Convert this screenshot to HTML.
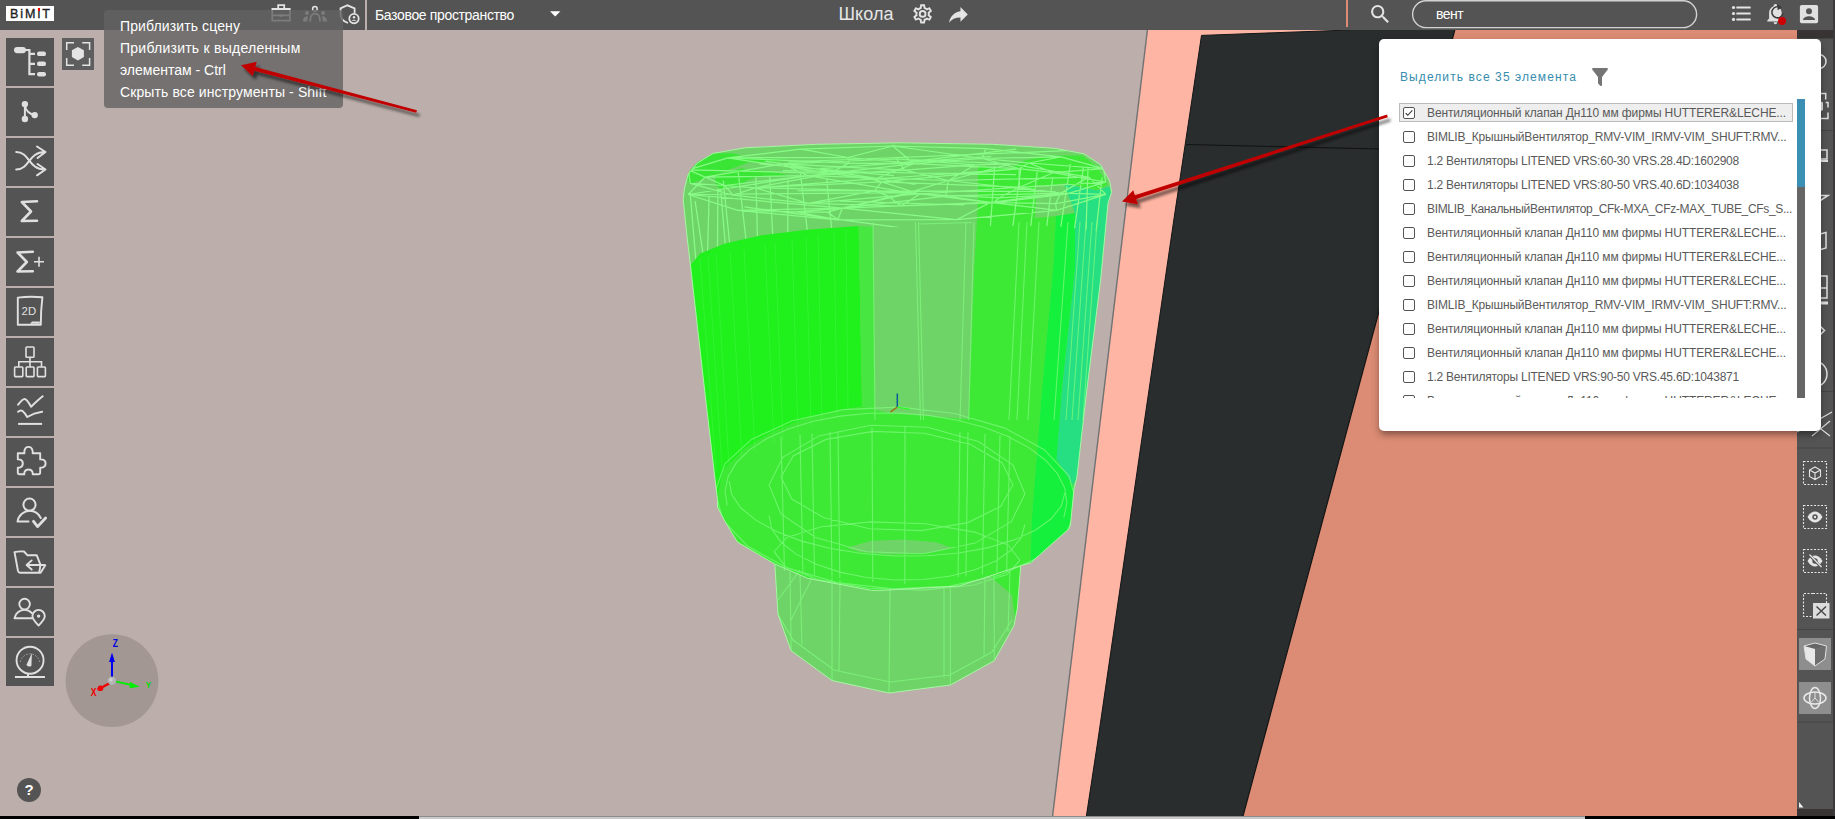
<!DOCTYPE html>
<html lang="ru">
<head>
<meta charset="utf-8">
<title>BIMIT</title>
<style>
*{box-sizing:border-box;margin:0;padding:0}
html,body{width:1835px;height:819px;overflow:hidden;background:#bcaeaa;font-family:"Liberation Sans",sans-serif}
#app{position:relative;width:1835px;height:819px;overflow:hidden;background:#bcaeaa}
#scene{position:absolute;left:0;top:0;width:1835px;height:819px}
#header{position:absolute;left:0;top:0;width:1835px;height:30px;background:#545454}
#logo{position:absolute;left:6px;top:6px;width:48px;height:15px;background:#fff;color:#1e1e1e;font-weight:normal;-webkit-text-stroke:0.350px #1e1e1e;font-size:12.500px;line-height:17px;white-space:nowrap}
#logo span{position:absolute;left:4px;top:0;letter-spacing:2px}
#logo b{position:relative;font-weight:inherit}
#logo i{position:absolute;left:0.200px;top:1.300px;width:2.400px;height:2.400px;background:#f00}
.lbtn{position:absolute;left:6px;width:48px;height:48px;background:#545454}
.lbtn svg{position:absolute;left:0;top:0;width:48px;height:48px}
#zoombtn{position:absolute;left:62px;top:38px;width:32px;height:32px;background:#5e5e5e}
#tooltip{position:absolute;left:104px;top:10px;width:239px;height:97.500px;background:rgba(97,97,97,0.8);border-radius:4px;color:#fff;font-size:14px;line-height:22px;padding:5px 0 0 16px;white-space:nowrap}
#hdiv{position:absolute;left:365px;top:0;width:2px;height:30px;background:#bcaeaa}
#space{position:absolute;left:375px;top:0;height:30px;line-height:30px;color:#fff;font-size:14px;white-space:nowrap;letter-spacing:-.35px}
#title{letter-spacing:.1px;position:absolute;left:838.500px;top:0;height:29px;line-height:28px;color:#e6e6e6;font-size:18px;white-space:nowrap}
#sdiv{position:absolute;left:1346px;top:0;width:2px;height:27px;background:#dc8c74}
#search{position:absolute;left:1412px;top:0;width:285px;height:28px;border-radius:14px;color:#fff;font-size:14px;line-height:28px;padding-left:24px;letter-spacing:-.5px}
#rbar{position:absolute;left:1797px;top:30px;width:38px;height:786px;background:#545454}
#popup{position:absolute;left:1379px;top:39px;width:442px;height:392px;background:#fff;border-radius:5px;box-shadow:0 5px 6px -2px rgba(0,0,0,.3),0 3px 10px rgba(0,0,0,.2)}
#selall{position:absolute;left:21px;top:30px;color:#368dad;font-size:12px;letter-spacing:1.09px;line-height:16px;white-space:nowrap}
#list{position:absolute;left:20px;top:60px;width:400px;height:299px;overflow:hidden}
.row{position:absolute;left:0;width:394px;height:24px;font-size:12px;line-height:24px;color:#5a5a5a;white-space:nowrap}
.row .cb{position:absolute;left:4px;top:6px;width:12px;height:12px;border:1px solid #555;border-radius:2px;background:#fff}
.row .tx{position:absolute;left:28px;top:0}
.row.sel{top:4px;height:19px;background:#eee;border:1px solid #bbb}
#sbar{position:absolute;left:418px;top:60px;width:8px;height:299px;background:#666}
#sbar div{width:8px;height:88px;background:#3a8fb3}
#bstrip{position:absolute;left:0;top:816px;width:1835px;height:3px;background:#000}
#bstrip div{position:absolute;left:418.500px;top:0;width:1166px;height:3px;background:#cacaca;border-top:1px solid #8c8c8c}
#help{position:absolute;left:17px;top:778px;width:24px;height:24px;border-radius:12px;background:#545454;color:#fff;font-weight:bold;font-size:15px;line-height:24px;text-align:center}
</style>
</head>
<body>
<div id="app">
<svg id="scene" viewBox="0 0 1835 819">
<defs><clipPath id="objclip"><polygon points="683.2,199.6 684.5,188.0 688.3,174.0 697.5,163.0 713.0,153.4 745.0,147.8 816.5,144.3 900.0,142.8 992.5,144.3 1054.8,148.3 1084.0,153.8 1100.6,164.8 1109.7,181.3 1111.6,192.3 1108.0,203.2 1100.6,280.0 1086.8,390.0 1076.8,478.0 1074.0,489.0 1070.4,525.5 1069.0,528.8 1030.6,562.9 1020.7,565.7 990.0,576.0 959.0,586.0 880.0,590.4 871.5,590.4 807.7,578.3 774.8,564.0 737.4,542.0 724.2,520.0 717.5,507.0 717.5,500.0 704.6,390.0 691.0,270.0 687.4,240.0"/><polygon points="774.8,564.0 778.0,614.5 791.2,650.8 832.0,680.5 889.0,693.0 950.4,685.0 994.3,660.7 1014.0,625.5 1017.4,608.0 1020.7,565.7 990.0,550.0 800.0,550.0"/></clipPath></defs><polygon points="1147.4,30.0 1350.0,30.0 1201.5,35.4 1191.9,100.0 1173.8,220.0 1098.1,739.0 1086.4,816.0 1052.6,816.0" fill="#ffb5a3"/>
<polygon points="1201.5,35.4 1350.0,30.0 1454.8,30.0 1243.0,816.0 1086.4,816.0 1098.1,739.0 1173.8,220.0 1191.9,100.0" fill="#2a2d2e"/>
<polygon points="1454.8,30.0 1797.0,30.0 1797.0,816.0 1243.0,816.0" fill="#dc8c74"/>
<line x1="1147.4" y1="30" x2="1052.6" y2="816" stroke="#707274" stroke-width="1.400"/>
<polyline points="1201.5,35.4 1191.9,100 1173.8,220 1098.1,739 1086.4,816" fill="none" stroke="#141617" stroke-width="1"/>
<line x1="1454.8" y1="30" x2="1243" y2="816" stroke="#111314" stroke-width="1.2"/>
<line x1="1186" y1="144.5" x2="1379" y2="149" stroke="#111314" stroke-width="1.2"/>
<line x1="1201.5" y1="35.4" x2="1350" y2="30" stroke="#141617" stroke-width="1"/>
<g id="obj">
<polygon points="774.8,564.0 778.0,614.5 791.2,650.8 832.0,680.5 889.0,693.0 950.4,685.0 994.3,660.7 1014.0,625.5 1017.4,608.0 1020.7,565.7 990.0,550.0 800.0,550.0" fill="#6fd468"/>
<polygon points="683.2,199.6 684.5,188.0 688.3,174.0 697.5,163.0 713.0,153.4 745.0,147.8 816.5,144.3 900.0,142.8 992.5,144.3 1054.8,148.3 1084.0,153.8 1100.6,164.8 1109.7,181.3 1111.6,192.3 1108.0,203.2 1100.6,280.0 1086.8,390.0 1076.8,478.0 1074.0,489.0 1070.4,525.5 1069.0,528.8 1030.6,562.9 1020.7,565.7 990.0,576.0 959.0,586.0 880.0,590.4 871.5,590.4 807.7,578.3 774.8,564.0 737.4,542.0 724.2,520.0 717.5,507.0 717.5,500.0 704.6,390.0 691.0,270.0 687.4,240.0" fill="#6fd468"/>
<polygon points="691.0,264.6 700.2,253.6 725.0,243.5 761.6,235.3 807.3,229.8 858.6,226.1 859.5,270.0 862.0,406.5 836.5,411.0 803.5,419.3 772.4,432.0 745.0,448.6 723.0,470.6 717.5,498.0 704.6,390.0 691.0,270.0" fill="#20f01c"/>
<polygon points="858.6,226.1 873.0,227.0 875.0,410.0 862.0,406.5 859.5,270.0" fill="#48e641"/>
<polygon points="717.5,498.0 723.0,470.6 745.0,448.6 772.4,432.0 803.5,419.3 836.5,411.0 862.0,406.5 875.0,410.0 890.0,412.9 968.7,419.3 974.2,270.0 978.0,200.0 978.0,166.0 1009.0,168.5 1026.0,160.0 1055.0,155.5 1082.0,155.5 1097.0,166.5 1108.0,185.0 1097.0,190.0 1082.0,187.0 1066.0,183.0 1060.0,200.0 1056.0,216.0 1053.0,270.0 1042.0,390.0 1031.7,520.0 1030.6,562.9 1020.7,565.7 990.0,576.0 959.0,586.0 880.0,590.4 871.5,590.4 807.7,578.3 774.8,564.0 737.4,542.0 724.2,520.0 717.5,507.0" fill="#3de935"/>
<polygon points="1056.0,216.0 1075.0,213.0 1075.0,270.0 1062.0,390.0 1056.6,459.6 1073.0,485.0 1074.0,489.0 1070.4,525.5 1069.0,528.8 1030.6,562.9 1031.7,520.0 1042.0,390.0 1053.0,270.0" fill="#15f03c"/>
<polygon points="1064.0,184.0 1082.0,187.5 1097.0,190.5 1109.5,186.0 1111.0,193.0 1108.0,203.2 1100.6,280.0 1086.8,390.0 1076.8,478.0 1073.0,485.0 1056.6,459.6 1062.0,390.0 1075.0,270.0 1075.0,213.0" fill="#26df82"/>
<polygon points="1020.7,565.7 990.0,576.0 1012.0,595.0 1015.0,620.0 1017.4,608.0" fill="#3de935"/>
<polygon points="847.0,548.0 870.0,541.0 901.8,539.4 935.0,542.0 952.6,548.0 930.0,553.0 890.0,554.5 860.0,552.0" fill="#6fd468"/>
<polygon points="686.5,178.0 690.0,170.0 697.5,162.0 713.0,153.3 732.5,153.2 748.0,157.5 800.0,160.5 748.0,162.4 722.0,172.5 706.0,178.0 690.0,184.0" fill="#3be535"/>
<polygon points="715.4,175.0 741.0,168.5 768.0,171.0 790.0,175.5 760.0,176.5 748.4,180.0 738.6,185.5 720.3,189.0 715.4,184.0" fill="#3be535"/>
<polygon points="1036.5,185.0 1050.0,185.5 1066.0,183.0 1060.0,200.0 1056.6,216.0 1035.0,218.0" fill="#6fd468"/>
<clipPath id="capclip"><polygon points="683.0,200.0 684.5,188.0 688.3,174.0 697.5,163.0 713.0,153.4 745.0,147.8 816.5,144.3 900.0,142.8 992.5,144.3 1054.8,148.3 1084.0,153.8 1100.6,164.8 1109.7,181.3 1111.6,192.3 1108.0,203.2 1105.0,232.0 1056.0,226.0 975.0,226.0 900.0,227.0 873.0,228.0 858.6,226.1 807.3,229.8 761.6,235.3 725.0,243.5 700.2,253.6 691.0,264.6 687.4,240.0"/></clipPath>
<path d="M848.0 157.5L848.5 163.1M881.6 181.9L919.8 194.0M999.5 197.8L993.2 202.8M919.8 194.0L1019.6 187.3M1019.0 168.7L1029.0 163.0M1066.1 194.2L993.2 202.8M1029.0 163.0L982.3 158.5M881.6 181.9L1019.0 168.7M724.6 185.5L690.3 183.3M919.8 194.0L993.2 202.8M1019.0 168.7L875.1 179.0M755.0 187.8L881.6 181.9M830.3 173.3L848.5 163.1M848.0 157.5L800.8 149.2M888.6 196.4L919.8 194.0M755.0 187.8L871.2 179.1M733.1 195.2L690.3 183.3M888.6 196.4L874.9 190.6M1053.1 172.7L1105.6 182.1M755.0 187.8L808.4 203.3M913.9 163.7L875.1 179.0M999.5 197.8L919.8 194.0M690.3 183.3L688.4 169.9M999.5 197.8L1066.1 194.2M1029.0 163.0L1103.7 168.7M993.2 202.8L901.2 206.0M688.4 169.9L727.9 157.8M901.2 206.0L808.4 203.3M1053.1 172.7L1019.6 187.3M724.6 185.5L733.1 195.2M1103.7 168.7L1105.6 182.1M913.9 163.7L1019.0 168.7M727.9 157.8L800.8 149.2M982.3 158.5L892.8 146.0M830.3 173.3L688.4 169.9M848.0 157.5L913.9 163.7M724.6 185.5L830.3 173.3M808.4 203.3L733.1 195.2M800.8 149.2L892.8 146.0M848.0 157.5L727.9 157.8M724.6 185.5L688.4 169.9M1019.6 187.3L1066.1 194.2M892.8 146.0L985.6 148.7M874.9 190.6L881.6 181.9M888.6 196.4L901.2 206.0M982.3 158.5L1060.9 156.8M1053.1 172.7L1103.7 168.7M755.0 187.8L874.9 190.6M881.6 181.9L1019.6 187.3M985.6 148.7L1060.9 156.8M830.3 173.3L871.2 179.1M848.5 163.1L727.9 157.8M1053.1 172.7L1029.0 163.0M1060.9 156.8L1103.7 168.7M913.9 163.7L892.8 146.0M881.6 181.9L871.2 179.1M755.0 187.8L724.6 185.5M871.2 179.1L875.1 179.0M1019.0 168.7L982.3 158.5M1019.6 187.3L1105.6 182.1M874.9 190.6L808.4 203.3M755.0 187.8L830.3 173.3M919.8 194.0L901.2 206.0M1019.0 168.7L1019.6 187.3M913.9 163.7L848.5 163.1M1066.1 194.2L1105.6 182.1M848.0 157.5L892.8 146.0M830.3 173.3L913.9 163.7M830.3 173.3L875.1 179.0M913.9 163.7L982.3 158.5M982.3 158.5L985.6 148.7M830.3 173.3L727.9 157.8M999.5 197.8L1019.6 187.3M881.6 181.9L875.1 179.0M1029.0 163.0L1060.9 156.8M1019.0 168.7L1053.1 172.7M874.9 190.6L919.8 194.0M888.6 196.4L808.4 203.3M755.0 187.8L733.1 195.2M1060.9 193.1L990.5 202.4M904.6 170.1L896.7 159.0M1010.8 163.9L1088.8 177.1M1055.6 203.6L1056.6 210.3M990.5 202.4L1055.6 203.6M1088.8 177.1L1105.9 194.4M948.4 180.5L808.0 175.7M842.2 208.2L737.7 210.3M842.2 208.2L827.5 212.1M1060.9 193.1L1088.8 177.1M910.8 193.4L909.0 192.7M688.2 194.5L705.0 177.2M948.4 180.5L975.4 164.8M975.4 164.8L1010.8 163.9M948.4 180.5L945.9 196.1M827.5 212.1L837.8 219.8M1056.6 210.3L956.7 219.7M808.0 175.7L688.2 194.5M1056.6 210.3L1105.9 194.4M909.0 192.7L945.9 196.1M705.0 177.2L782.7 163.9M909.0 192.7L688.2 194.5M904.6 170.1L782.7 163.9M990.5 202.4L842.2 208.2M842.2 208.2L909.0 192.7M990.5 202.4L956.7 219.7M1060.9 193.1L1055.6 203.6M842.2 208.2L796.7 211.8M990.5 202.4L945.9 196.1M956.7 219.7L837.8 219.8M796.7 211.8L827.5 212.1M796.7 211.8L737.7 210.3M948.4 180.5L904.6 170.1M842.2 208.2L837.8 219.8M808.0 175.7L904.6 170.1M910.8 193.4L842.2 208.2M910.8 193.4L945.9 196.1M782.7 163.9L896.7 159.0M975.4 164.8L896.7 159.0M948.4 180.5L1088.8 177.1M808.0 175.7L782.7 163.9M837.8 219.8L737.7 210.3M1060.9 193.1L945.9 196.1M896.7 159.0L1010.8 163.9M1055.6 203.6L1105.9 194.4M842.2 208.2L945.9 196.1M990.5 202.4L1056.6 210.3M842.2 208.2L956.7 219.7M1060.9 193.1L1105.9 194.4M948.4 180.5L1060.9 193.1M842.2 208.2L688.2 194.5M948.4 180.5L909.0 192.7M796.7 211.8L837.8 219.8M808.0 175.7L909.0 192.7M948.4 180.5L1010.8 163.9M808.0 175.7L705.0 177.2M904.6 170.1L975.4 164.8M737.7 210.3L688.2 194.5M744.4 206.9L901.6 227.8M797.7 190.5L1055.5 191.5M759.4 163.8L893.9 175.7M788.3 162.0L1066.7 150.7M782.8 170.7L1016.0 174.6M820.0 168.7L991.2 156.4M765.5 161.1L915.3 184.3M892.0 163.9L1016.4 149.1M840.0 201.1L964.1 205.0M690.2 193.1L696.8 272.0M695.1 201.1L705.8 272.0M709.1 196.9L707.0 272.0M717.8 188.4L717.4 272.0M720.6 188.8L727.6 272.0M723.3 180.6L732.5 272.0M738.0 170.5L749.8 272.0M755.8 176.6L758.4 272.0M769.7 176.6L774.6 272.0M787.9 180.0L787.6 272.0M800.4 173.3L812.3 272.0M826.6 178.6L836.1 272.0M994.7 165.9L990.0 232.0M1021.0 167.6L1012.0 232.0M1037.4 169.9L1030.0 232.0M1052.8 177.0L1046.0 232.0M1070.4 163.8L1060.0 232.0M1083.4 167.5L1074.0 232.0M1088.0 168.1L1086.0 232.0M1102.1 177.4L1096.0 232.0" fill="none" stroke="#88fb86" stroke-width="1.250" clip-path="url(#capclip)"/>
<path d="M700.0 258.0L716.0 470.0M708.0 256.4L722.0 467.3M716.0 254.8L729.0 464.1M730.0 252.0L742.0 458.3M744.0 249.2L755.0 452.4M765.0 245.0L774.0 443.9M775.0 243.0L783.0 439.9M792.0 239.6L798.0 433.1M806.0 236.8L811.0 427.2M818.0 234.4L822.0 422.3M834.0 231.2L837.0 415.6M846.0 228.8L848.0 410.6" fill="none" stroke="#4cf848" stroke-width="1" stroke-opacity="0.45" clip-path="url(#objclip)"/>
<path d="M873.0 222.0L875.0 420.0M915.5 222.0L920.5 420.0M918.5 222.0L923.5 420.0M966.0 222.0L960.0 420.0M974.0 222.0L968.7 420.0M1019.0 222.0L1009.0 420.0M1027.0 222.0L1017.0 420.0M1039.0 222.0L1028.0 420.0M1068.0 222.0L1054.0 420.0M1080.0 222.0L1066.0 420.0M1086.0 222.0L1072.0 420.0M1092.0 222.0L1078.0 420.0M1097.0 222.0L1083.0 420.0M918.0 224.0L972.0 222.5M1076.9 504.3L1067.1 532.1L1040.5 556.6L999.8 575.3L948.9 586.4L892.8 588.9L837.1 582.5L787.1 567.9L747.8 546.3L723.0 520.1L715.1 491.7L724.9 463.9L751.5 439.4L792.2 420.7L843.1 409.6L899.2 407.1L954.9 413.5L1004.9 428.1L1044.2 449.7L1069.0 475.9L1076.9 504.3ZM727.2 505.7L725.1 491.0L728.2 476.5L736.4 462.7L749.5 449.9L767.0 438.5L788.4 428.9L813.1 421.3L840.3 416.1L869.2 413.3L898.9 413.1L928.6 415.4L957.2 420.2L984.0 427.3L1008.1 436.5L1028.8 447.6L1045.5 460.2L1057.6 473.9L1064.8 488.3L1066.9 503.0L1063.8 517.5M1024.9 494.0L1011.3 521.7L975.0 543.1L923.3 553.8L866.3 551.8L815.5 537.5L780.8 513.7L769.1 485.0L782.7 457.3L819.0 435.9L870.7 425.2L927.7 427.2L978.5 441.5L1013.2 465.3L1024.9 494.0ZM1012.9 485.0L1000.7 506.3L967.9 522.6L921.1 530.6L869.5 528.8L823.4 517.5L791.8 499.0L781.1 477.0L793.3 455.7L826.1 439.4L872.9 431.4L924.5 433.2L970.6 444.5L1002.2 463.0L1012.9 485.0ZM1064.9 492.9L1061.2 506.2L1051.2 518.8L1035.3 530.2L1014.0 539.9L988.3 547.6L959.0 553.0L927.4 555.8L894.6 556.0L861.9 553.5L830.5 548.5L801.7 541.1L776.6 531.6L756.1 520.4L741.0 508.0L731.9 494.7L729.1 481.1M1024.9 524.5L1021.2 537.7L1011.3 550.0L995.7 560.9L975.1 569.7L950.6 576.0L923.4 579.5L894.9 580.0L866.5 577.5L839.6 572.1L815.6 564.1L795.7 553.9L780.8 542.0L771.8 529.0L769.1 515.5M1019.9 560.3L1007.2 574.6L972.7 585.2L923.2 590.1L868.5 588.2L819.4 579.9L785.7 566.9L774.1 551.7L786.8 537.4L821.3 526.8L870.8 521.9L925.5 523.8L974.6 532.1L1008.3 545.1L1019.9 560.3ZM781.0 436.6L784.5 571.1M800.0 434.7L802.9 573.4M812.0 433.5L814.5 574.8M830.0 431.7L832.0 577.0M838.0 430.9L839.8 577.9M872.0 427.5L872.8 582.0M905.0 425.8L904.8 584.0M960.0 431.3L958.1 577.4M968.0 432.1L965.9 576.5M985.0 433.8L982.4 574.4M1000.0 435.3L996.9 572.6M1010.0 436.3L1006.6 571.4M778.0 614.5L793.0 640.0L834.0 670.0L890.0 682.0L950.0 675.0L992.0 652.0L1012.0 620.0M890.0 590.0L889.0 693.0M832.0 578.0L832.0 680.5M840.0 580.0L839.0 672.0M950.4 586.0L950.4 685.0M944.0 587.0L944.0 678.0M994.0 575.0L994.3 660.7M985.0 578.0L984.0 655.0M790.0 572.0L791.2 650.8M800.0 575.0L802.0 645.0M1010.0 570.0L1008.0 632.0M778.0 600.0L800.0 570.0M791.0 620.0L812.0 578.0" fill="none" stroke="#80f97e" stroke-width="1.100" stroke-opacity="0.720" clip-path="url(#objclip)"/>
<polygon points="683.2,199.6 684.5,188.0 688.3,174.0 697.5,163.0 713.0,153.4 745.0,147.8 816.5,144.3 900.0,142.8 992.5,144.3 1054.8,148.3 1084.0,153.8 1100.6,164.8 1109.7,181.3 1111.6,192.3 1108.0,203.2 1100.6,280.0 1086.8,390.0 1076.8,478.0 1074.0,489.0 1070.4,525.5 1069.0,528.8 1030.6,562.9 1020.7,565.7 990.0,576.0 959.0,586.0 880.0,590.4 871.5,590.4 807.7,578.3 774.8,564.0 737.4,542.0 724.2,520.0 717.5,507.0 717.5,500.0 704.6,390.0 691.0,270.0 687.4,240.0" fill="none" stroke="#a6f7a2" stroke-width="1"/>
<polyline points="774.8,564.0 778.0,614.5 791.2,650.8 832.0,680.5 889.0,693.0 950.4,685.0 994.3,660.7 1014.0,625.5 1017.4,608.0 1020.7,565.7" fill="none" stroke="#a6f7a2" stroke-width="1" />
<path d="M897.3 393.5V407" stroke="#0a5a9a" stroke-width="1.5"/><path d="M897.3 407L890.5 412" stroke="#a06a10" stroke-width="1.5"/><path d="M897.3 407L909.7 409.3" stroke="#22ff22" stroke-width="1.2"/>
</g><circle cx="112" cy="680.700" r="46.400" fill="#a39793"/>
<path d="M112 681V659" stroke="#0000ee" stroke-width="2"/><path d="M112 652.500l-2.900 9.500h5.800z" fill="#0000ee"/>
<path d="M110 683L97.500 689.800" stroke="#f00000" stroke-width="2.400"/><circle cx="100.500" cy="688.300" r="2.800" fill="#f00000"/>
<path d="M116 681.700L132 685" stroke="#00ee00" stroke-width="1.800"/><path d="M139.700 686.700l-9.600-4.600-.600 6.200z" fill="#00ee00"/>
<circle cx="111.900" cy="680.800" r="4.200" fill="#b4b4b4"/><circle cx="111" cy="679.800" r="1.600" fill="#d4d4d0"/>
<text x="112.700" y="646.900" font-family="Liberation Sans,sans-serif" font-size="11.300" font-weight="bold" textLength="5.200" lengthAdjust="spacingAndGlyphs" fill="#0000dd">Z</text>
<text x="145.700" y="688.200" font-family="Liberation Sans,sans-serif" font-size="9.800" font-weight="bold" textLength="5.600" lengthAdjust="spacingAndGlyphs" fill="#00dd00">Y</text>
<text x="90.800" y="696.200" font-family="Liberation Sans,sans-serif" font-size="11.300" font-weight="bold" textLength="5.800" lengthAdjust="spacingAndGlyphs" fill="#ee0000">X</text>
</svg>
<div id="header">
<div id="logo"><span>BiM<b>i<i></i></b>T</span></div>
<div id="hdiv"></div>
<div id="space">Базовое пространство</div>
<div id="title">Школа</div>
<div id="sdiv"></div>
<div id="search">вент</div><svg style="position:absolute;left:1410px;top:0" width="290" height="30" viewBox="1410 0 290 30"><rect x="1412.600" y="0.700" width="284" height="26.900" rx="13.450" fill="none" stroke="#d2d2d2" stroke-width="1.400"/></svg>
<svg style="position:absolute;left:0;top:0" width="1835" height="30" viewBox="0 0 1835 30">
<g fill="none" stroke="#e4e4e4" stroke-width="1.800">
<path d="M278.200 8.500V5.100H284.200V8.500"/>
<path d="M271.500 9H290.600" stroke-width="2"/>
<path d="M272.200 10V20.700H289.900V10M272.200 15.400H289.900" stroke-width="1.700"/>
</g>
<rect x="279.400" y="14.400" width="3.300" height="2.300" fill="#e4e4e4"/>
<g fill="#e4e4e4">
<circle cx="314.900" cy="8.900" r="2.300" fill="none" stroke="#e4e4e4" stroke-width="1.500"/>
<circle cx="307" cy="12.900" r="2"/><circle cx="323" cy="12.900" r="2"/>
<path d="M303 21.600C303 18.500 304.500 16.300 308 16.300C307.500 18 307.300 19.500 307.300 21.600Z"/>
<path d="M327 21.600C327 18.500 325.500 16.300 322 16.300C322.500 18 322.700 19.500 322.700 21.600Z"/>
<path d="M310.200 21.600C310.200 16 311.800 13.700 315.100 13.700S320 16 320 21.600" fill="none" stroke="#e4e4e4" stroke-width="1.700"/>
</g>
<path d="M354.600 13V8.400L347.400 5.300L340.500 8.400V14C340.500 18.500 343.500 21.500 348 23" fill="none" stroke="#e4e4e4" stroke-width="1.800"/>
<circle cx="354" cy="18.600" r="4.700" fill="#545454" stroke="#e4e4e4" stroke-width="1.800"/>
<circle cx="354" cy="17.300" r="1.200" fill="#e4e4e4"/><path d="M351.800 20.800C351.800 19.400 356.200 19.400 356.200 20.800Z" fill="#e4e4e4"/>
<path d="M550 11.200H560.400L555.200 16.600Z" fill="#fff"/>
<!-- gear -->
<g transform="translate(911.100,2.400) scale(0.960)" fill="#e4e4e4"><path d="M12,8A4,4 0 0,1 16,12A4,4 0 0,1 12,16A4,4 0 0,1 8,12A4,4 0 0,1 12,8M12,10A2,2 0 0,0 10,12A2,2 0 0,0 12,14A2,2 0 0,0 14,12A2,2 0 0,0 12,10M10,22C9.750,22 9.540,21.820 9.500,21.580L9.130,18.930C8.500,18.680 7.960,18.340 7.440,17.940L4.950,18.950C4.730,19.030 4.460,18.950 4.340,18.730L2.340,15.270C2.210,15.050 2.270,14.780 2.460,14.630L4.570,12.970L4.500,12L4.570,11L2.460,9.370C2.270,9.220 2.210,8.950 2.340,8.730L4.340,5.270C4.460,5.050 4.730,4.960 4.950,5.050L7.440,6.050C7.960,5.660 8.500,5.320 9.130,5.070L9.500,2.420C9.540,2.180 9.750,2 10,2H14C14.250,2 14.460,2.180 14.500,2.420L14.870,5.070C15.500,5.320 16.040,5.660 16.560,6.050L19.050,5.050C19.270,4.960 19.540,5.050 19.660,5.270L21.660,8.730C21.790,8.950 21.730,9.220 21.540,9.370L19.430,11L19.500,12L19.430,13L21.540,14.630C21.730,14.780 21.790,15.050 21.660,15.270L19.660,18.730C19.540,18.950 19.270,19.040 19.050,18.950L16.560,17.950C16.040,18.340 15.500,18.680 14.870,18.930L14.500,21.580C14.460,21.820 14.250,22 14,22H10M11.250,4L10.880,6.610C9.680,6.860 8.620,7.500 7.850,8.390L5.440,7.350L4.690,8.650L6.800,10.200C6.400,11.370 6.400,12.640 6.800,13.800L4.680,15.360L5.430,16.660L7.860,15.620C8.630,16.500 9.680,17.140 10.870,17.380L11.240,20H12.760L13.130,17.390C14.320,17.140 15.370,16.500 16.140,15.620L18.570,16.660L19.320,15.360L17.200,13.810C17.600,12.640 17.600,11.370 17.200,10.200L19.310,8.650L18.560,7.350L16.150,8.390C15.380,7.500 14.320,6.860 13.120,6.620L12.750,4H11.250Z"/></g>
<!-- share -->
<g transform="translate(945.900,1.900) scale(1.040)" fill="#e4e4e4"><path d="M21,12L14,5V9C7,10 4,15 3,20C5.500,16.500 9,14.900 14,14.900V19L21,12Z"/></g>
<!-- search -->
<g transform="translate(1368,2) scale(1.020)" fill="#e4e4e4"><path d="M9.500,3A6.500,6.500 0 0,1 16,9.500C16,11.110 15.410,12.590 14.440,13.730L14.710,14H15.500L20.500,19L19,20.500L14,15.500V14.710L13.730,14.440C12.590,15.410 11.110,16 9.500,16A6.500,6.500 0 0,1 3,9.500A6.500,6.500 0 0,1 9.500,3M9.500,5C7,5 5,7 5,9.500C5,12 7,14 9.500,14C12,14 14,12 14,9.500C14,7 12,5 9.500,5Z"/></g>
<!-- list -->
<g fill="#e4e4e4"><circle cx="1733.500" cy="7.500" r="1.600"/><circle cx="1733.500" cy="13.500" r="1.600"/><circle cx="1733.500" cy="19.400" r="1.600"/><rect x="1736.300" y="6.500" width="14.400" height="2" rx="0.500"/><rect x="1736.300" y="12.500" width="14.400" height="2" rx="0.500"/><rect x="1736.300" y="18.400" width="14.400" height="2" rx="0.500"/></g>
<!-- bell -->
<g transform="translate(1763.100,2.200) scale(1)" fill="#e0e0e0"><path d="M21,19V20H3V19L5,17V11C5,7.900 7.030,5.170 10,4.290C10,4.190 10,4.100 10,4A2,2 0 0,1 12,2A2,2 0 0,1 14,4C14,4.100 14,4.190 14,4.290C16.970,5.170 19,7.900 19,11V17L21,19M14,21A2,2 0 0,1 12,23A2,2 0 0,1 10,21" transform="translate(1.500,0) scale(0.900,0.960)"/></g>
<path d="M1780.500 7.500A5.600 5.600 0 1 0 1783 13.500" fill="none" stroke="#3a3a3a" stroke-width="1.500"/><path d="M1777.500 4.200L1782 7.600L1777.600 10.300Z" fill="#3a3a3a"/>
<circle cx="1782" cy="21" r="4" fill="#cc0000"/>
<!-- account box -->
<rect x="1799.900" y="5" width="18.200" height="18.200" rx="1.800" fill="#e0e0e0"/>
<circle cx="1809" cy="11.300" r="3" fill="#545454"/><path d="M1803 20C1803 17.400 1806.500 16.200 1809 16.200S1815 17.400 1815 20Z" fill="#545454"/>
<rect x="1833" y="0" width="2" height="30" fill="#3c3a3a"/>
</svg>

</div>
<div class="lbtn" style="top:38px"><svg viewBox="0 0 48 48"><rect x="8" y="9" width="12" height="6.200" rx="3.100" fill="#e0e0e0"/><path d="M19 12H23.400V36.200H29M23.400 15.800H29M23.400 25.900H29" fill="none" stroke="#e0e0e0" stroke-width="2.200"/><rect x="31" y="13.600" width="9" height="4.500" rx="2.200" fill="#e0e0e0"/><rect x="31" y="23.600" width="9" height="4.500" rx="2.200" fill="#e0e0e0"/><rect x="31" y="33.900" width="9" height="4.500" rx="2.200" fill="#e0e0e0"/></svg></div>
<div class="lbtn" style="top:88px"><svg viewBox="0 0 48 48"><circle cx="18.900" cy="16.100" r="3.200" fill="#e0e0e0"/><circle cx="18.900" cy="31" r="3.200" fill="#e0e0e0"/><circle cx="28.700" cy="27.100" r="3.200" fill="#e0e0e0"/><path d="M18.900 16V31M18.900 17C19.500 23 24 26.500 28.700 27.100" fill="none" stroke="#e0e0e0" stroke-width="2"/></svg></div>
<div class="lbtn" style="top:138px"><svg viewBox="0 0 48 48"><path d="M10.200 14C24 14 22 31.500 39 31.500M10.200 31.500C24 31.500 22 14 39 14M31 8.500L39.500 14L31.500 20M31.500 26L39.500 31.500L31 37.300" fill="none" stroke="#e0e0e0" stroke-width="2" stroke-linecap="round" stroke-linejoin="round"/></svg></div>
<div class="lbtn" style="top:188px"><svg viewBox="0 0 48 48"><path d="M31 13.200L15.800 14L25 23.500L15.800 33L31 32.700" fill="none" stroke="#e0e0e0" stroke-width="2.600" stroke-linecap="round" stroke-linejoin="round"/></svg></div>
<div class="lbtn" style="top:238px"><svg viewBox="0 0 48 48"><path d="M26.800 13.700L11.600 14.500L20.800 24L11.600 33.500L26.800 33.200" fill="none" stroke="#e0e0e0" stroke-width="2.600" stroke-linecap="round" stroke-linejoin="round"/><path d="M28 23.700H38M33 18.700V28.700" stroke="#e0e0e0" stroke-width="1.600"/></svg></div>
<div class="lbtn" style="top:288px"><svg viewBox="0 0 48 48"><path d="M11.800 9.600Q24 8.200 36.400 9.300Q34.800 22 34.800 36.800H11.800Z" fill="none" stroke="#e0e0e0" stroke-width="1.900" stroke-linejoin="round"/><path d="M24 35.800L26 33.600H33.800V35.800Z" fill="#e0e0e0"/><text x="15.600" y="26.800" font-family="Liberation Sans,sans-serif" font-size="11" fill="#e0e0e0" textLength="14.500" lengthAdjust="spacingAndGlyphs">2D</text></svg></div>
<div class="lbtn" style="top:338px"><svg viewBox="0 0 48 48"><g fill="none" stroke="#e0e0e0" stroke-width="1.600"><rect x="20" y="9" width="8" height="10.200" rx="0.800"/><rect x="8.600" y="29" width="8.200" height="9.600" rx="0.800"/><rect x="20.200" y="29" width="7.800" height="9.600" rx="0.800"/><rect x="31.400" y="29" width="8" height="9.600" rx="0.800"/><path d="M24 19.200V29M12.800 29V23.700H35.500V29"/></g></svg></div>
<div class="lbtn" style="top:388px"><svg viewBox="0 0 48 48"><g fill="none" stroke="#e0e0e0" stroke-linecap="round" stroke-linejoin="round"><path d="M12.100 16.700Q16.500 11 18.600 11T25.100 18.700Q32 12 36.700 8.300" stroke-width="2"/><path d="M12.100 23.800Q14.500 21.500 16.500 23T21.200 29Q28 25 36.100 23.800" stroke-width="2"/><path d="M12.100 35.900H36.100" stroke-width="2" stroke-linecap="butt"/></g></svg></div>
<div class="lbtn" style="top:438px"><svg viewBox="0 0 48 48"><path d="M11.800 15.200H18.400C18.400 15.200 17.600 8.900 22.500 8.900C27.400 8.900 26.600 15.200 26.600 15.200H34.200V21.400C34.200 21.400 39.600 20.800 39.600 25.500C39.600 30.200 34.200 29.600 34.200 29.600V34.500Q34.200 36.300 32.400 36.300H26.700C26.700 36.300 27.300 31.500 22.500 31.500C17.700 31.500 18.300 36.300 18.300 36.300H13.600Q11.800 36.300 11.800 34.500V29.600C11.800 29.600 16.800 30.200 16.800 25.500C16.800 20.800 11.800 21.400 11.800 21.400Z" fill="none" stroke="#e0e0e0" stroke-width="1.900" stroke-linejoin="round"/></svg></div>
<div class="lbtn" style="top:488px"><svg viewBox="0 0 48 48"><g fill="none" stroke="#e0e0e0" stroke-linecap="round" stroke-linejoin="round"><circle cx="23.500" cy="16.700" r="6.100" stroke-width="2"/><path d="M22.500 33.600H11.500C12.500 27 18 22.800 23.800 22.800C28.500 22.800 32.500 25.500 34.800 30" stroke-width="2"/><path d="M27.500 33.300L31.600 38.600L39.600 30" stroke-width="2.800"/></g></svg></div>
<div class="lbtn" style="top:538px"><svg viewBox="0 0 48 48"><g fill="none" stroke="#e0e0e0" stroke-linecap="round" stroke-linejoin="round" stroke-width="1.900"><path d="M8.500 14.200Q13 13 18 13.500L21.500 17.300H30.800L34.500 26.800L39.300 27.300L34.600 34.700H14Q12.500 34.700 12 33Z"/><path d="M38 27H21M25.700 22.400L20.600 27L25.700 31.500"/><path d="M34.500 26.800L33.300 34"/></g></svg></div>
<div class="lbtn" style="top:588px"><svg viewBox="0 0 48 48"><g fill="none" stroke="#e0e0e0" stroke-linecap="round" stroke-linejoin="round" stroke-width="1.900"><circle cx="18.600" cy="16.100" r="5.300"/><path d="M26 30.300H8.500C9.500 25 14 21.900 18.600 21.900C21.500 21.900 24 23 25.800 25"/><path d="M32.600 37.600C29 34 26.400 31 26.400 28.100A6.200 6.200 0 0 1 38.800 28.100C38.800 31 36.200 34 32.600 37.600Z" fill="#545454"/></g><circle cx="32.600" cy="28.100" r="1.700" fill="#e0e0e0"/></svg></div>
<div class="lbtn" style="top:638px"><svg viewBox="0 0 48 48"><g fill="none" stroke="#e0e0e0"><circle cx="24.050" cy="22.200" r="13.500" stroke-width="1.900"/><path d="M14.400 24A9.800 9.800 0 0 1 33.700 24" stroke-width="1" stroke-opacity="0.600" stroke-dasharray="1.600 1.600"/><path d="M22 35.500V39" stroke-width="2"/><path d="M8.900 39H39" stroke-width="2"/></g><path d="M25.900 15.100L25.400 28Q22.600 29.400 20.400 27Z" fill="#e0e0e0"/></svg></div>
<div id="zoombtn"><svg width="32" height="32" viewBox="62 38 32 32" style="position:absolute;left:0;top:0"><path d="M66.700 50V42.800H74M82.200 42.800H89.600V50M89.600 58V65.300H82.200M74 65.300H66.700V58" fill="none" stroke="#e4e4e4" stroke-width="1.500"/><path d="M77.900 46.900L83.900 50.300V57.100L77.900 60.500L71.900 57.100V50.300Z" fill="#e4e4e4"/></svg></div>
<div id="rbar"><svg style="position:absolute;left:0;top:0" width="38" height="789" viewBox="1797 30 38 789">
<rect x="1797" y="809" width="38" height="7" fill="#383433"/><rect x="1797" y="30" width="38" height="8.500" fill="#383433"/>
<rect x="1833" y="30" width="2" height="786" fill="#3c3a3a"/>
<g stroke="#444" stroke-width="1.200"><path d="M1797 130.500H1833M1797 391.500H1833M1797 448H1833M1797 629.500H1833M1797 722H1833"/></g>
<g fill="none" stroke="#e0e0e0" stroke-width="1.500">
<circle cx="1819" cy="61.500" r="7"/>
<path d="M1821 93.600H1825.700V99.500M1825.700 102.600H1828V107.500M1828 112.500V118.600H1821"/><path d="M1815 98.500L1823 102.500V110L1815 114Z" fill="#e0e0e0" stroke="none"/>
<rect x="1812" y="150" width="15" height="9"/><path d="M1812 161H1828" stroke-width="2"/>
<path d="M1812 206L1828 195.500H1812"/>
<path d="M1812 236L1826 232.500V248L1812 252"/>
<path d="M1812 276H1827V298H1812M1812 288H1827" /><path d="M1812 303H1828" stroke-width="3"/>
<path d="M1818 324L1824.500 330.500L1818 337"/>
<circle cx="1814" cy="374" r="13"/><rect x="1808" y="367" width="12" height="13"/>
<path d="M1797 432L1832 412M1812 422L1830 436M1812 436L1830 421" stroke-width="1.100"/>
</g>
<g fill="none" stroke="#e6e6e6" stroke-width="1.100" stroke-dasharray="2 1.500">
<rect x="1803.500" y="461.500" width="23" height="23"/><rect x="1803.500" y="505.500" width="23" height="23"/><rect x="1803.500" y="549.500" width="23" height="23"/><path d="M1813 593.500H1803.500V616.500H1813M1813 593.500H1826.500V603"/>
</g>
<g fill="none" stroke="#e6e6e6" stroke-width="1.100"><path d="M1815 467L1820.500 470V476.500L1815 479.500L1809.500 476.500V470ZM1809.500 470L1815 473L1820.500 470M1815 473V479.500"/></g>
<path d="M1807.500 517C1810 512.800 1812.500 511.500 1815 511.500S1820 512.800 1822.500 517C1820 521.200 1817.500 522.500 1815 522.500S1810 521.200 1807.500 517Z" fill="#e6e6e6"/><circle cx="1815" cy="517" r="2.700" fill="#545454"/><circle cx="1815" cy="517" r="1.200" fill="#e6e6e6"/>
<path d="M1807.500 561C1810 556.800 1812.500 555.500 1815 555.500S1820 556.800 1822.500 561C1820 565.200 1817.500 566.500 1815 566.500S1810 565.200 1807.500 561Z" fill="#e6e6e6"/><circle cx="1815" cy="561" r="2.700" fill="#545454"/><path d="M1809 554.500L1821.500 567.500" stroke="#545454" stroke-width="2.600"/><path d="M1809.500 554.500L1821.500 567" stroke="#e6e6e6" stroke-width="1.200"/>
<rect x="1813" y="603" width="16.500" height="15.500" fill="#dcdcdc"/><path d="M1816.500 606.500L1826 615.500M1826 606.500L1816.500 615.500" stroke="#444" stroke-width="1.400"/>
<rect x="1799" y="638" width="32" height="32" fill="#8e8e8e"/><rect x="1799" y="682" width="32" height="32" fill="#8e8e8e"/>
<path d="M1804 646L1815 643L1826.500 646L1815 649Z" fill="#666"/><path d="M1804 646L1815 649V666L1806 659Z" fill="#e8e8e8"/><path d="M1815 649L1826.500 646L1825 659L1815 666Z" fill="#6e6e6e"/><path d="M1804 646L1815 643L1826.500 646L1825 659L1815 666L1806 659Z" fill="none" stroke="#e0e0e0" stroke-width="1"/>
<g fill="none" stroke="#e8e8e8" stroke-width="1.500"><ellipse cx="1815" cy="698" rx="11" ry="6"/><ellipse cx="1815" cy="698" rx="5.500" ry="10.500"/><path d="M1815 692V698L1811.500 702M1815 698L1818.500 702" stroke-width="0.900"/></g>
<path d="M1799 802L1803.500 807.500H1799Z" fill="#f0f0f0"/>
</svg>
</div>
<div id="tooltip"><span style="letter-spacing:.11px">Приблизить сцену</span><br><span style="letter-spacing:.24px">Приблизить к выделенным</span><br><span style="letter-spacing:0">элементам - Ctrl</span><br><span style="letter-spacing:.11px">Скрыть все инструменты - Shift</span></div>
<div id="popup">
<div id="selall">Выделить все 35 элемента</div>
<svg style="position:absolute;left:208.500px;top:26px" width="24" height="24" viewBox="0 0 24 24"><path fill="#757575" d="M14,12V19.880C14.040,20.180 13.940,20.500 13.710,20.710C13.320,21.100 12.690,21.100 12.300,20.710L10.290,18.700C10.060,18.470 9.960,18.160 10,17.870V12H9.970L4.210,4.620C3.870,4.190 3.950,3.560 4.380,3.220C4.570,3.080 4.780,3 5,3V3H19V3C19.220,3 19.430,3.080 19.620,3.220C20.050,3.560 20.130,4.190 19.790,4.620L14.030,12H14Z"/></svg>
<div id="list"><div class="row sel" style="top:4px"><span class="cb" style="top:3px;left:3px"><svg viewBox="0 0 12 12" width="10" height="10" style="position:absolute;left:0;top:0"><path d="M2 6.200l2.500 2.500L10 2.800" fill="none" stroke="#333" stroke-width="1.300"/></svg></span><span class="tx"  style="letter-spacing:-0.115px;left:27px;top:-3.500px">Вентиляционный клапан Дн110 мм фирмы HUTTERER&amp;LECHE...</span></div>
<div class="row" style="top:26px"><span class="cb"></span><span class="tx" style="letter-spacing:-0.18px">BIMLIB_КрышныйВентилятор_RMV-VIM_IRMV-VIM_SHUFT:RMV...</span></div>
<div class="row" style="top:50px"><span class="cb"></span><span class="tx" style="letter-spacing:-0.232px">1.2 Вентиляторы LITENED VRS:60-30 VRS.28.4D:1602908</span></div>
<div class="row" style="top:74px"><span class="cb"></span><span class="tx" style="letter-spacing:-0.232px">1.2 Вентиляторы LITENED VRS:80-50 VRS.40.6D:1034038</span></div>
<div class="row" style="top:98px"><span class="cb"></span><span class="tx" style="letter-spacing:-0.326px">BIMLIB_КанальныйВентилятор_CFk-MXA_CFz-MAX_TUBE_CFs_S...</span></div>
<div class="row" style="top:122px"><span class="cb"></span><span class="tx" style="letter-spacing:-0.115px">Вентиляционный клапан Дн110 мм фирмы HUTTERER&amp;LECHE...</span></div>
<div class="row" style="top:146px"><span class="cb"></span><span class="tx" style="letter-spacing:-0.115px">Вентиляционный клапан Дн110 мм фирмы HUTTERER&amp;LECHE...</span></div>
<div class="row" style="top:170px"><span class="cb"></span><span class="tx" style="letter-spacing:-0.115px">Вентиляционный клапан Дн110 мм фирмы HUTTERER&amp;LECHE...</span></div>
<div class="row" style="top:194px"><span class="cb"></span><span class="tx" style="letter-spacing:-0.18px">BIMLIB_КрышныйВентилятор_RMV-VIM_IRMV-VIM_SHUFT:RMV...</span></div>
<div class="row" style="top:218px"><span class="cb"></span><span class="tx" style="letter-spacing:-0.115px">Вентиляционный клапан Дн110 мм фирмы HUTTERER&amp;LECHE...</span></div>
<div class="row" style="top:242px"><span class="cb"></span><span class="tx" style="letter-spacing:-0.115px">Вентиляционный клапан Дн110 мм фирмы HUTTERER&amp;LECHE...</span></div>
<div class="row" style="top:266px"><span class="cb"></span><span class="tx" style="letter-spacing:-0.232px">1.2 Вентиляторы LITENED VRS:90-50 VRS.45.6D:1043871</span></div>
<div class="row" style="top:290px"><span class="cb"></span><span class="tx" style="letter-spacing:-0.115px">Вентиляционный клапан Дн110 мм фирмы HUTTERER&amp;LECHE...</span></div>
</div>
<div id="sbar"><div></div></div>
</div>
<div id="help">?</div>
<div id="bstrip"><div></div></div>
<svg id="anno" style="position:absolute;left:0;top:0;width:1835px;height:819px;pointer-events:none" viewBox="0 0 1835 819"><defs><filter id="ash" x="-10%" y="-30%" width="120%" height="180%"><feGaussianBlur in="SourceAlpha" stdDeviation="1.6"/><feOffset dx="3" dy="3.500"/><feComponentTransfer><feFuncA type="linear" slope="0.55"/></feComponentTransfer><feMerge><feMergeNode/><feMergeNode in="SourceGraphic"/></feMerge></filter></defs>
<g filter="url(#ash)" fill="#c00000">
<polygon points="241,65.300 256.800,61.800 255.300,67 417,110.200 416.200,112.800 254.300,70.800 252.800,76"/>
<polygon points="1122,201.400 1133.300,190.200 1134.900,195.300 1387,114.600 1387.800,117.200 1136.100,199 1137.900,204.200"/>
</g>
</svg>
</div>
</body>
</html>
